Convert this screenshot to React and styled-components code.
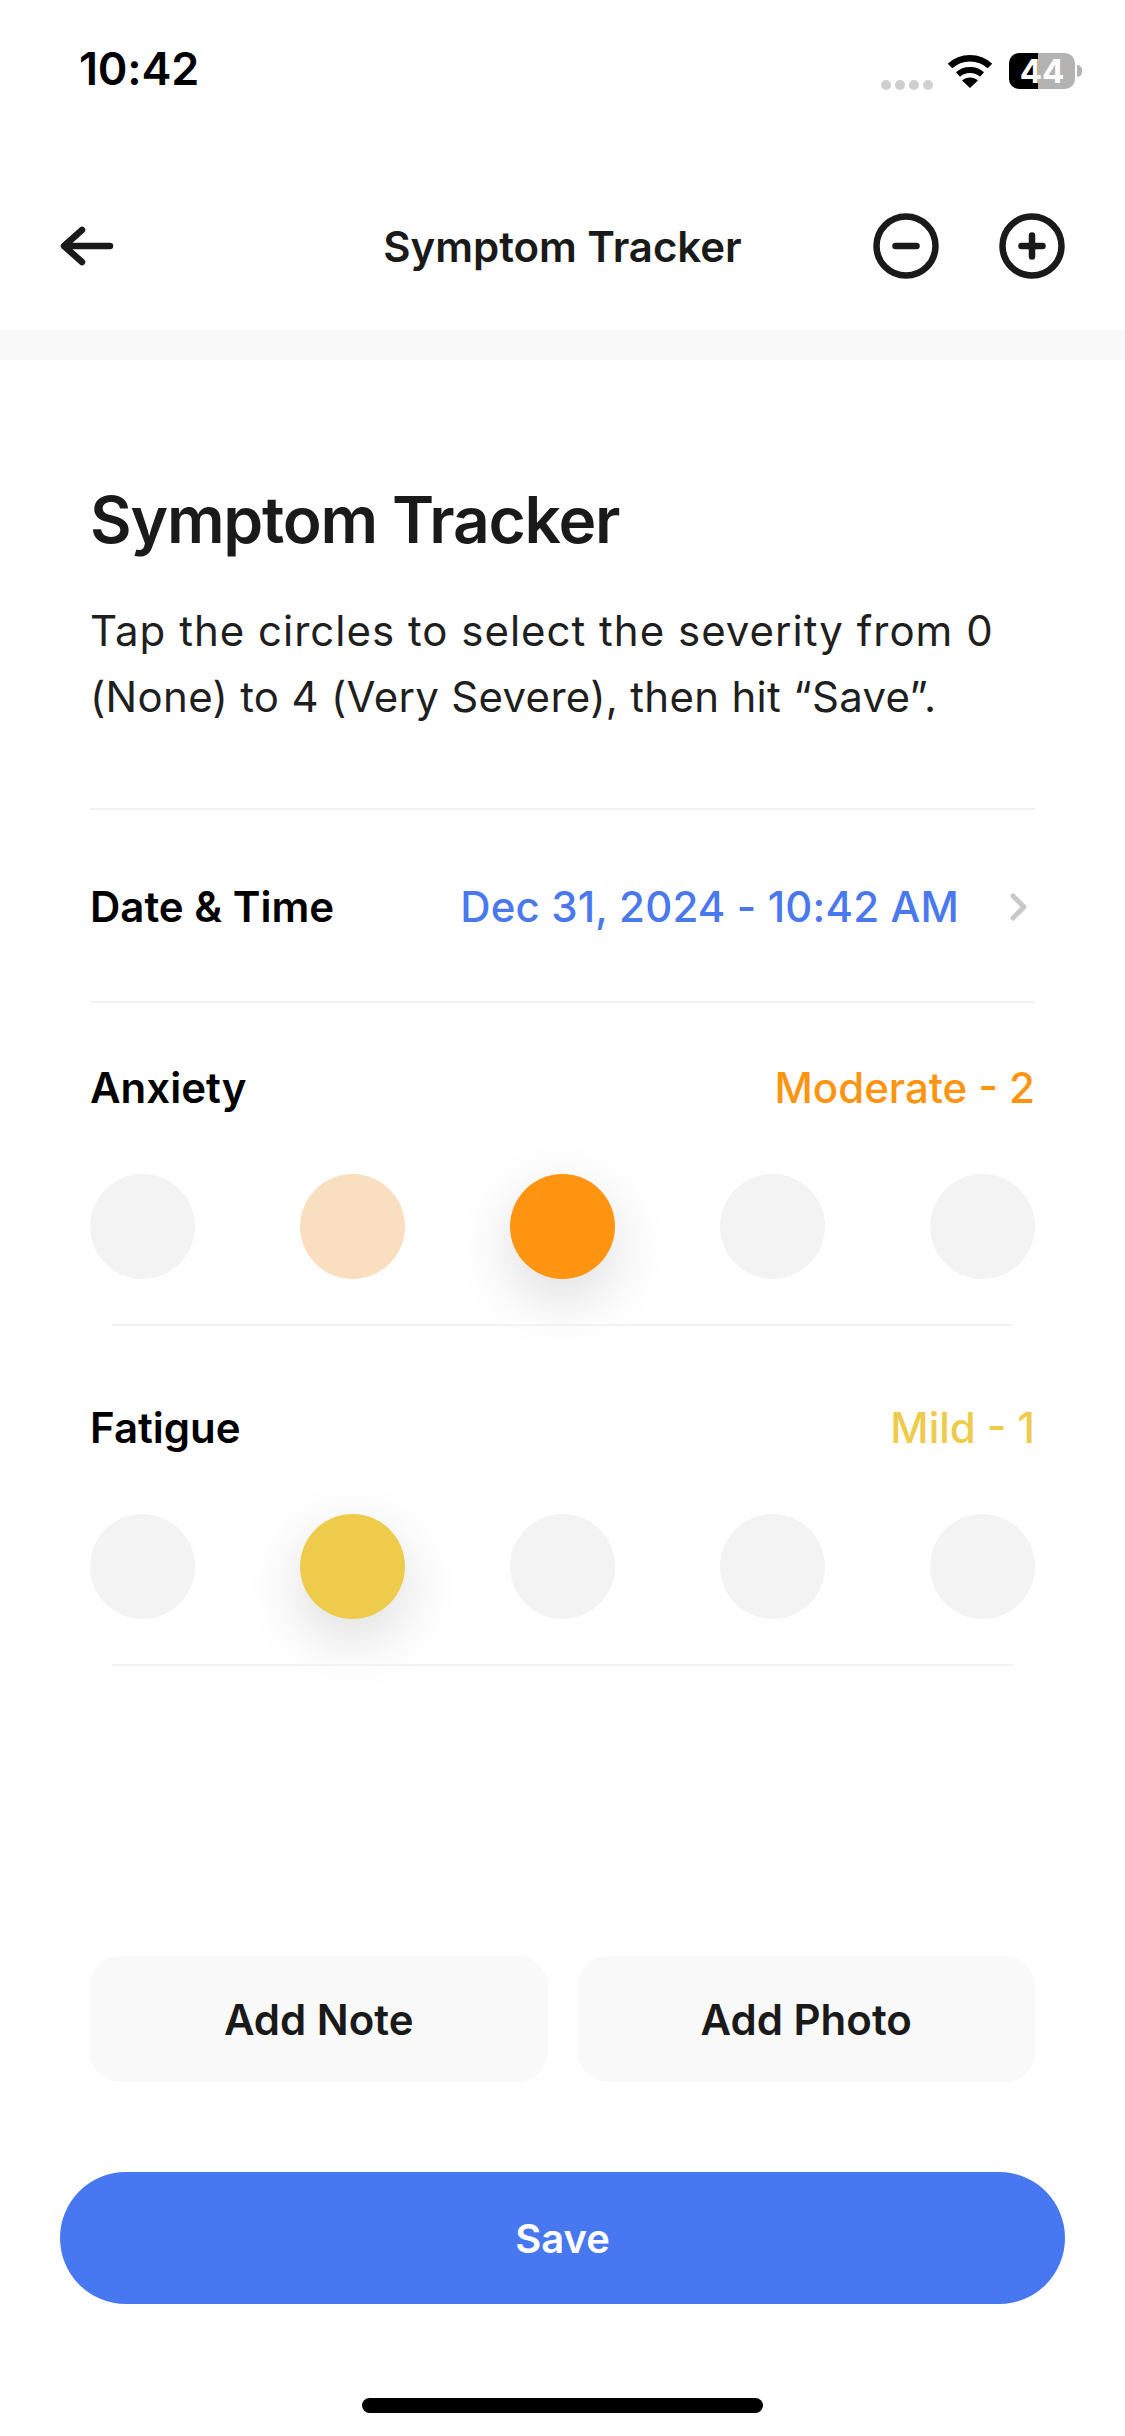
import React from 'react';
import styled, { createGlobalStyle } from 'styled-components';

const GlobalStyle = createGlobalStyle`
  * { box-sizing: border-box; }
  html, body { margin: 0; padding: 0; background: #fff; }
  body { font-family: Inter, "Liberation Sans", sans-serif; }
`;

const Screen = styled.div`
  width: 1125px;
  height: 2436px;
  display: flex;
  flex-direction: column;
  background: #fff;
  overflow: hidden;
`;

const StatusBar = styled.div`
  height: 162px;
  flex: none;
  display: flex;
  justify-content: space-between;
  align-items: flex-start;
  padding: 46px 43px 0 79px;
`;

const Clock = styled.span`
  font-size: 45px;
  line-height: 46px;
  font-weight: 600;
  letter-spacing: -0.2px;
  color: #000;
`;

const StatusIcons = styled.div`
  display: flex;
  align-items: center;
  gap: 16px;
  height: 44px;
  margin-top: 3px;
`;

const SignalDots = styled.div`
  display: flex;
  gap: 4px;
  align-self: flex-end;
  margin-bottom: 3px;
  margin-right: -2px;
`;

const SignalDot = styled.i`
  width: 10px;
  height: 10px;
  border-radius: 50%;
  background: #cfcfcf;
`;

const Battery = styled.div`
  width: 66px;
  height: 36px;
  flex: none;
  border-radius: 10px;
  background: linear-gradient(to right, #000 0 44%, #b3b3b3 44% 100%);
  color: #fff;
  font-size: 33px;
  line-height: 36px;
  font-weight: 700;
  text-align: center;
`;

const BatteryCap = styled.i`
  width: 5px;
  height: 12px;
  margin-left: -14px;
  border-radius: 0 5px 5px 0;
  background: #b3b3b3;
`;

const Header = styled.header`
  height: 168px;
  flex: none;
  display: grid;
  grid-template-columns: 1fr auto 1fr;
  align-items: center;
  padding: 0 60px;
`;

const HeaderTitle = styled.h2`
  margin: 0;
  font-size: 42px;
  font-weight: 600;
  letter-spacing: -0.05px;
  color: #1a1a1a;
`;

const HeaderActions = styled.div`
  display: flex;
  justify-content: flex-end;
  gap: 60px;
`;

const Band = styled.div`
  height: 30px;
  flex: none;
  background: #f9f9f9;
`;

const Body = styled.main`
  flex: 1;
  display: flex;
  flex-direction: column;
  padding: 0 90px;
`;

const Heading = styled.h1`
  margin: 122px 0 0;
  font-size: 64px;
  line-height: 76px;
  font-weight: 600;
  letter-spacing: -1.2px;
  color: #1a1a1a;
`;

const Intro = styled.p`
  margin: 40px 0 0;
  font-size: 42px;
  line-height: 66px;
  font-weight: 400;
  color: #1f1f1f;
  white-space: nowrap;
`;

const IntroLine = styled.span`
  display: block;
  letter-spacing: ${p => p.$spacing}px;
`;

const Rule = styled.div`
  height: 2px;
  flex: none;
  background: #f2f2f2;
  margin: ${p => p.$top || 0}px ${p => p.$inset ? 22 : 0}px 0;
`;

const DateRow = styled.div`
  height: 191px;
  padding-top: 2px;
  display: flex;
  align-items: center;
  justify-content: space-between;
`;

const RowLabel = styled.span`
  font-size: 42px;
  font-weight: 600;
  color: #000;
`;

const DateValue = styled.span`
  display: flex;
  align-items: center;
  gap: 50px;
  font-size: 42px;
  font-weight: 500;
  letter-spacing: 0.15px;
  color: #4a78ef;
  padding-right: 6px;
`;

const Symptom = styled.section`
  display: flex;
  flex-direction: column;
`;

const SymptomHead = styled.div`
  display: flex;
  justify-content: space-between;
  align-items: center;
  height: 48px;
  margin-top: ${p => p.$top}px;
`;

const Severity = styled.span`
  font-size: 42px;
  font-weight: 500;
  color: ${p => p.$color};
`;

const Dots = styled.div`
  display: flex;
  justify-content: space-between;
  margin: 63px 0 45px;
`;

const Dot = styled.div`
  width: 105px;
  height: 105px;
  border-radius: 50%;
  background: ${p => p.$color || '#f3f3f3'};
  box-shadow: ${p => p.$glow ? '0 20px 60px rgba(0, 0, 0, 0.14)' : 'none'};
`;

const Actions = styled.div`
  margin-top: auto;
  display: grid;
  grid-template-columns: 1fr 1fr;
  gap: 30px;
  padding: 0 0 90px;
`;

const GhostButton = styled.button`
  height: 126px;
  border: 0;
  border-radius: 30px;
  background: #f9f9f9;
  font: 600 42px Inter, sans-serif;
  color: #1a1a1a;
`;

const SaveButton = styled.button`
  flex: none;
  height: 132px;
  margin: 0 60px;
  border: 0;
  border-radius: 66px;
  background: #4877f2;
  font: 600 40px Inter, sans-serif;
  color: #fff;
`;

const HomeBar = styled.div`
  flex: none;
  width: 401px;
  height: 15px;
  margin: 94px auto 23px;
  border-radius: 8px;
  background: #000;
`;

const Wifi = () => (
  <svg width="46" height="34" viewBox="0 0 46 34">
    <path d="M3 12C14 1.500 32 1.500 43 12" fill="none" stroke="#000" strokeWidth="6.500" />
    <path d="M11 20.500c6.500-6 17.500-6 24 0" fill="none" stroke="#000" strokeWidth="6" />
    <path d="M23 34l-8-7.500c4.500-4 11.500-4 16 0z" fill="#000" />
  </svg>
);

const BackArrow = () => (
  <svg width="54" height="40" viewBox="0 0 54 40" fill="none" stroke="#1a1a1a" strokeWidth="6.500" strokeLinecap="round" strokeLinejoin="round">
    <path d="M50 20H5" />
    <path d="M22 4L4 20l18 16" />
  </svg>
);

const RoundIcon = ({ plus }) => (
  <svg width="66" height="66" viewBox="0 0 66 66" fill="none" stroke="#1a1a1a" strokeLinecap="round" strokeWidth="6.500">
    <circle cx="33" cy="33" r="29.500" />
    <path d="M22.500 33h21" />
    {plus && <path d="M33 22.500v21" />}
  </svg>
);

const Chevron = () => (
  <svg width="20" height="30" viewBox="0 0 20 30" fill="none" stroke="#c8c8c8" strokeWidth="5" strokeLinecap="round" strokeLinejoin="round">
    <path d="M4 4l11 11L4 26" />
  </svg>
);

const symptoms = [
  { name: 'Anxiety', label: 'Moderate - 2', color: '#ff9411', top: 60, dots: { 1: '#f9dfc0', 2: '#ff9411' }, glow: [2] },
  { name: 'Fatigue', label: 'Mild - 1', color: '#eecb4b', top: 77, dots: { 1: '#eecb4b' }, glow: [1] },
];

export default function App() {
  return (
    <Screen>
      <GlobalStyle />
      <StatusBar>
        <Clock>10:42</Clock>
        <StatusIcons>
          <SignalDots>
            <SignalDot /><SignalDot /><SignalDot /><SignalDot />
          </SignalDots>
          <Wifi />
          <Battery>44</Battery>
          <BatteryCap />
        </StatusIcons>
      </StatusBar>
      <Header>
        <BackArrow />
        <HeaderTitle>Symptom Tracker</HeaderTitle>
        <HeaderActions>
          <RoundIcon />
          <RoundIcon plus />
        </HeaderActions>
      </Header>
      <Band />
      <Body>
        <Heading>Symptom Tracker</Heading>
        <Intro>
          <IntroLine $spacing={1}>Tap the circles to select the severity from 0</IntroLine>
          <IntroLine $spacing={0.3}>(None) to 4 (Very Severe), then hit “Save”.</IntroLine>
        </Intro>
        <Rule $top={78} />
        <DateRow>
          <RowLabel>Date &amp; Time</RowLabel>
          <DateValue>Dec 31, 2024 - 10:42 AM <Chevron /></DateValue>
        </DateRow>
        <Rule />
        {symptoms.map(s => (
          <Symptom key={s.name}>
            <SymptomHead $top={s.top}>
              <RowLabel>{s.name}</RowLabel>
              <Severity $color={s.color}>{s.label}</Severity>
            </SymptomHead>
            <Dots>
              {[0, 1, 2, 3, 4].map(i => (
                <Dot key={i} $color={s.dots[i]} $glow={s.glow.includes(i)} />
              ))}
            </Dots>
            <Rule $inset />
          </Symptom>
        ))}
        <Actions>
          <GhostButton>Add Note</GhostButton>
          <GhostButton>Add Photo</GhostButton>
        </Actions>
      </Body>
      <SaveButton>Save</SaveButton>
      <HomeBar />
    </Screen>
  );
}
